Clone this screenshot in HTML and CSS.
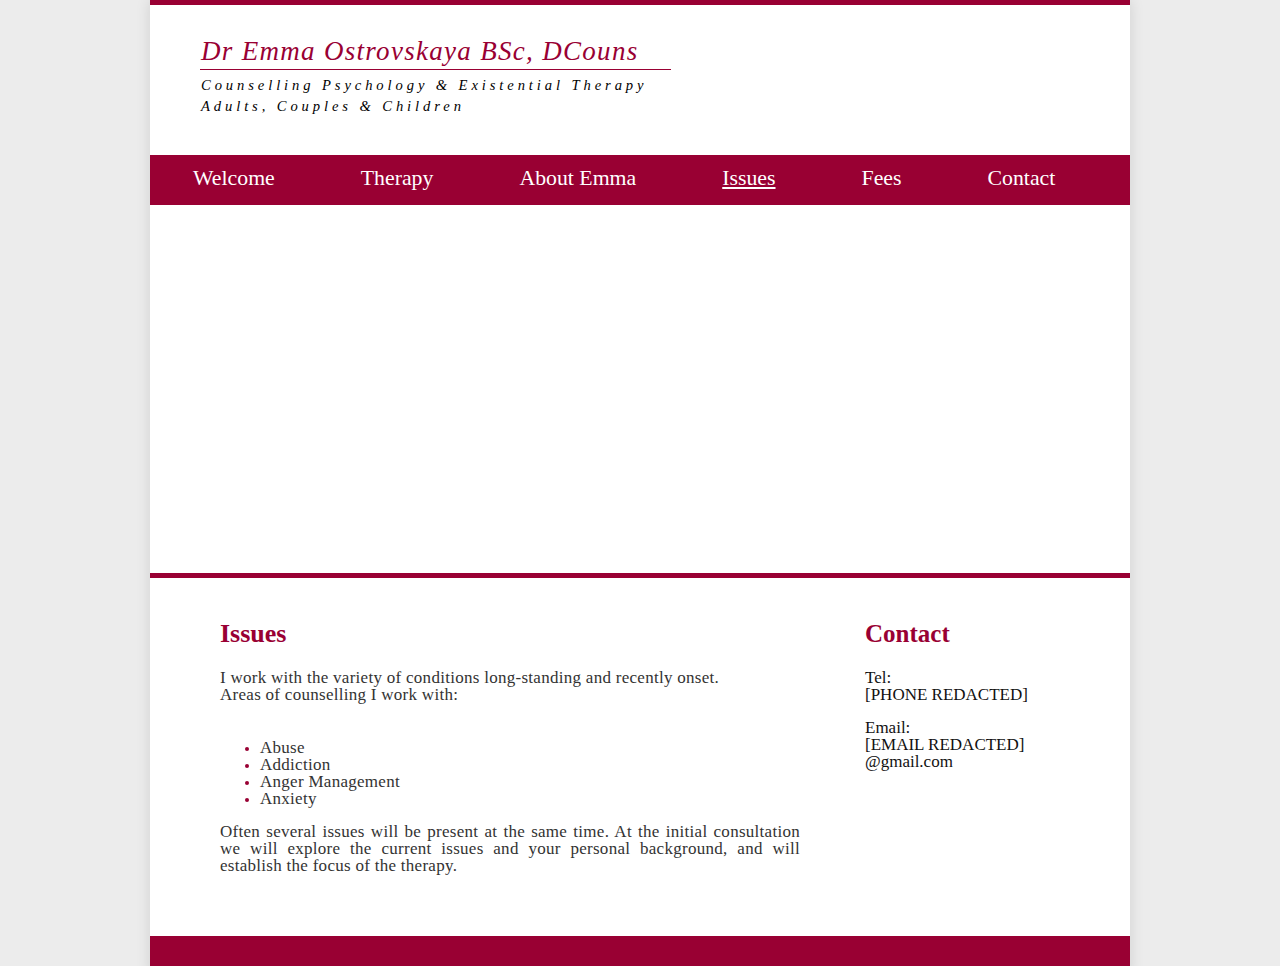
FILE: index.html
```html
<!DOCTYPE html>
<html lang="en">
<head>
<meta charset="utf-8">
<title>Dr Emma Ostrovskaya - Issues</title>
<link rel="stylesheet" href="styles.css">
</head>
<body>
<div class="page">
  <header class="masthead">
    <h1 class="site-title">Dr Emma Ostrovskaya BSc, DCouns</h1>
    <p class="tagline">Counselling Psychology &amp; Existential Therapy<br>Adults, Couples &amp; Children</p>
  </header>
  <nav class="mainnav">
    <a href="#">Welcome</a>
    <a href="#">Therapy</a>
    <a href="#">About Emma</a>
    <a href="#" class="current">Issues</a>
    <a href="#">Fees</a>
    <a href="#">Contact</a>
  </nav>
  <div class="hero"></div>
  <main class="content">
    <section class="main-col">
      <h2>Issues</h2>
      <p>I work with the variety of conditions long-standing and recently onset.<br>Areas of counselling I work with:</p>
      <ul class="issues">
        <li>Abuse</li>
        <li>Addiction</li>
        <li>Anger Management</li>
        <li>Anxiety</li>
      </ul>
      <p>Often several issues will be present at the same time. At the initial consultation we will explore the current issues and your personal background, and will establish the focus of the therapy.</p>
    </section>
    <aside class="side-col">
      <h2>Contact</h2>
      <p>Tel:<br>[PHONE REDACTED]</p>
      <p>Email:<br>[EMAIL REDACTED]<br>@gmail.com</p>
    </aside>
  </main>
  <footer class="footer"></footer>
</div>
</body>
</html>
```
FILE: styles.css
```css
html, body {
  margin: 0;
  padding: 0;
  background: #ececec;
}
body {
  font-family: "Liberation Serif", "Times New Roman", serif;
  font-size: 17px;
  line-height: 17px;
  color: #333;
}
.page {
  width: 980px;
  margin: 0 auto;
  background: #fff;
  border-top: 5px solid #990033;
  box-shadow: 0 0 14px rgba(0,0,0,0.12);
}
.masthead {
  padding: 30px 0 0 50px;
  height: 120px;
}
.site-title {
  margin: 0;
  width: 470px;
  font-size: 27px;
  line-height: 32px;
  font-style: italic;
  font-weight: normal;
  letter-spacing: 1.3px;
  color: #990033;
  border-bottom: 1px solid #990033;
  padding: 0 0 2px 1px;
}
.tagline {
  margin: 5px 0 0 1px;
  font-size: 14.6px;
  line-height: 21px;
  font-style: italic;
  letter-spacing: 3.9px;
  color: #000;
}
.mainnav {
  display: flex;
  height: 50px;
  align-items: center;
  background: #990033;
}
.mainnav a {
  padding: 0 43px 4px;
  color: #fff;
  text-decoration: none;
  font-size: 21.8px;
  line-height: 24px;
}
.mainnav a.current {
  text-decoration: underline;
}
.hero {
  height: 368px;
  border-bottom: 5px solid #990033;
}
.content {
  display: flex;
  padding: 42px 70px 46px 70px;
}
.main-col {
  width: 580px;
  letter-spacing: 0.28px;
  text-align: justify;
}
.side-col {
  margin-left: 65px;
  width: 190px;
  color: #111;
}
h2 {
  margin: 0 0 21px;
  font-size: 25px;
  line-height: 28px;
  font-weight: bold;
  letter-spacing: 0;
  color: #990033;
}
.main-col h2 {
  font-size: 26px;
}
p {
  margin: 0 0 16px;
}
.issues {
  margin: 36px 0 16px;
  padding-left: 40px;
}
.issues li::marker {
  color: #990033;
  font-size: 13px;
}
.footer {
  height: 40px;
  background: #990033;
}
```
